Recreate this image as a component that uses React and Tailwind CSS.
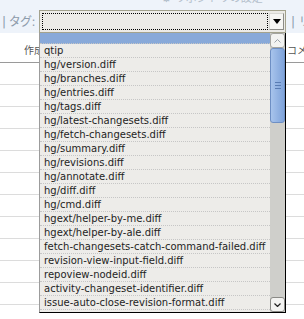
import React from 'react';

const tags = [
    'qtip',
    'hg/version.diff',
    'hg/branches.diff',
    'hg/entries.diff',
    'hg/tags.diff',
    'hg/latest-changesets.diff',
    'hg/fetch-changesets.diff',
    'hg/summary.diff',
    'hg/revisions.diff',
    'hg/annotate.diff',
    'hg/diff.diff',
    'hg/cmd.diff',
    'hgext/helper-by-me.diff',
    'hgext/helper-by-ale.diff',
    'fetch-changesets-catch-command-failed.diff',
    'revision-view-input-field.diff',
    'repoview-nodeid.diff',
    'activity-changeset-identifier.diff',
    'issue-auto-close-revision-format.diff',
    'wiki-macro-hg-changeset-link.diff',
];

const rows = Array.from({ length: 11 });

const App = () => {
    return (
        <div className="relative w-[304px] h-[319px] overflow-hidden bg-white font-['DejaVu_Sans','Noto_Sans_CJK_JP',sans-serif]">
            {/* Toolbar */}
            <div className="h-[33px] bg-[#eef3fa]">
                <div className="h-[10px] overflow-hidden">
                    <div className="-mt-[8px] ml-[161px] flex items-center gap-[3px] text-[11px] leading-[13px] text-[#b4c0cc] whitespace-nowrap">
                        <span className="text-[12px]">⚙</span>
                        <span>リポジトリの設定</span>
                    </div>
                </div>
                <div className="flex items-center h-[23px]">
                    <span className="w-[39px] shrink-0 pl-[2px] text-[12px] leading-[14px] tracking-[-0.6px] text-[#8d9bab] whitespace-nowrap">| タグ:</span>
                    <div className="w-[247px] shrink-0 h-[23px] border border-[#a3a28d] bg-[#ecebe7] flex items-center pl-[2px] pr-[1px] py-[2px] gap-[1px]">
                        <div className="flex-1 h-[17px] border border-dotted border-black" />
                        <div className="w-[15px] h-[17px] bg-[#f6f6f4] border border-[#d8d8d4] border-r-[#8c8c88] border-b-[#8c8c88] flex items-center justify-center">
                            <div className="w-0 h-0 border-l-[4px] border-r-[4px] border-t-[5px] border-l-transparent border-r-transparent border-t-black" />
                        </div>
                    </div>
                    <span className="ml-[5px] shrink-0 text-[12px] leading-[14px] text-[#8d9bab] whitespace-nowrap">| リ</span>
                </div>
            </div>

            {/* Table behind the list */}
            <div className="flex items-center justify-between h-[30px] pt-[6px] border-b border-[#9a9a9a] text-[10px] text-[#555] whitespace-nowrap">
                <span className="ml-[24px]">作成者</span>
                <span className="w-[17px] overflow-hidden">コメント</span>
            </div>
            {rows.map((_, i) => (
                <div key={i} className="h-[22px] border-b border-[#dcdcdc]" />
            ))}

            {/* Dropdown list */}
            <div className="absolute left-[39px] top-[33px] w-[247px] h-[280px] flex border-l border-[#9c9c9c] border-r border-r-black border-b border-b-black bg-[#edece9]">
                <div className="flex-1 overflow-hidden">
                    <div className="h-[11px] bg-[#88a9d9] border-b border-dotted border-[#c6c6c6]" />
                    {tags.map((tag) => (
                        <div key={tag} className="h-[14px] pl-[4px] border-b border-dotted border-[#c6c6c6] text-[10px] leading-[13px] text-[#1e1e1e] whitespace-nowrap">
                            {tag}
                        </div>
                    ))}
                </div>
                {/* Scrollbar */}
                <div className="w-[15px] flex flex-col bg-[#cfcfcb]">
                    <div className="h-[15px] bg-[#f3f3f1] border border-[#a4a4a0] rounded-[3px] flex items-center justify-center">
                        <svg width="7" height="4" viewBox="0 0 7 4"><path d="M0.5 3.5 L3.5 0.5 L6.5 3.5" fill="none" stroke="#9aa0a8" strokeWidth="1" /></svg>
                    </div>
                    <div className="h-[75px] bg-gradient-to-r from-[#a8c4ec] to-[#7fa3da] border border-[#6e8fc4] rounded-[3px] flex flex-col items-center justify-center gap-[2px]">
                        <div className="w-[6px] h-px bg-[#5a7db4]" />
                        <div className="w-[6px] h-px bg-[#5a7db4]" />
                        <div className="w-[6px] h-px bg-[#5a7db4]" />
                    </div>
                    <div className="flex-1" />
                    <div className="h-[15px] bg-[#f3f3f1] border border-[#8a8a86] rounded-[3px] flex items-center justify-center">
                        <svg width="7" height="4" viewBox="0 0 7 4"><path d="M0.5 0.5 L3.5 3.5 L6.5 0.5" fill="none" stroke="#222" strokeWidth="1.2" /></svg>
                    </div>
                </div>
            </div>
        </div>
    );
};

export default App;
